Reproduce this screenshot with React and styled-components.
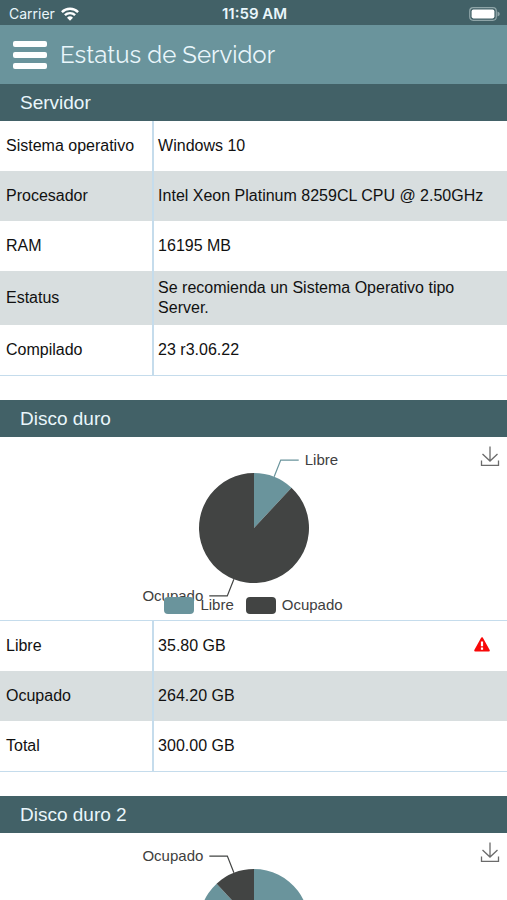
import React from 'react'
import styled, { createGlobalStyle, ThemeProvider } from 'styled-components'

const theme = {
    primary: '#6a949c',
    dark: '#426167',
    slice: '#424443',
    stripe: '#d8dedf',
    line: '#c5dcec',
    text: '#111111',
    label: '#404040',
    light: '#e9f6fb',
}

const GlobalStyle = createGlobalStyle`
    * {
        box-sizing: border-box;
    }
    body {
        margin: 0;
        background: #ffffff;
        font-family: "Liberation Sans", Arial, sans-serif;
    }
`

const Page = styled.div`
    display: flex;
    flex-direction: column;
    height: 100vh;
    color: ${({ theme }) => theme.text};
`
const StatusBar = styled.div`
    display: grid;
    grid-template-columns: 1fr auto 1fr;
    align-items: center;
    flex: none;
    height: 25px;
    padding: 2px 7px 0 9px;
    background: ${({ theme }) => theme.dark};
    color: ${({ theme }) => theme.light};
    font-family: Inter, sans-serif;
    font-size: 14px;
`
const Carrier = styled.div`
    display: flex;
    align-items: center;
    gap: 6px;
`
const Clock = styled.div`
    font-size: 15px;
    font-weight: 600;
`
const Battery = styled.svg`
    justify-self: end;
`
const Header = styled.header`
    display: flex;
    align-items: center;
    flex: none;
    gap: 13px;
    height: 59px;
    padding: 0 13px;
    background: ${({ theme }) => theme.primary};
`
const MenuButton = styled.button`
    display: flex;
    flex-direction: column;
    gap: 5px;
    width: 34px;
    padding: 0;
    border: none;
    background: none;
    cursor: pointer;
`
const Bar = styled.span`
    height: 6px;
    border-radius: 2px;
    background: #ffffff;
`
const PageTitle = styled.h1`
    margin: 0;
    font-family: Raleway, Lato, sans-serif;
    font-size: 24px;
    font-weight: 400;
    line-height: 32px;
    color: ${({ theme }) => theme.light};
`
const Content = styled.main`
    flex: 1;
    overflow-y: auto;
    scrollbar-width: none;
`
const Section = styled.section`
    margin-bottom: 24px;
`
const SectionTitle = styled.h2`
    margin: 0;
    padding: 0 20px;
    font-size: 19px;
    font-weight: 400;
    line-height: 37px;
    background: ${({ theme }) => theme.dark};
    color: ${({ theme }) => theme.light};
`
const Table = styled.table`
    width: 100%;
    table-layout: fixed;
    border-collapse: separate;
    border-spacing: 0;
    border-bottom: 1px solid ${({ theme }) => theme.line};
    font-size: 16px;
    line-height: 20px;
`
const Row = styled.tr`
    height: 50px;
    &:nth-child(even) {
        background: ${({ theme }) => theme.stripe};
    }
`
const Name = styled.th`
    width: 30%;
    padding: 7px 6px;
    font-weight: 400;
    text-align: left;
`
const Value = styled.td`
    padding: 7px 16px 7px 4px;
    border-left: 2px solid ${({ theme }) => theme.line};
`
const ValueContent = styled.div`
    display: flex;
    align-items: center;
    justify-content: space-between;
`
const ChartBox = styled.div`
    position: relative;
    display: flex;
    justify-content: center;
    height: 184px;
    border-bottom: 1px solid ${({ theme }) => theme.line};
`
const SliceLabel = styled.text`
    font-size: 15px;
    fill: ${({ theme }) => theme.label};
`
const Legend = styled.div`
    position: absolute;
    bottom: 6px;
    left: 0;
    right: 0;
    display: flex;
    justify-content: center;
    gap: 12px;
`
const LegendItem = styled.div`
    display: flex;
    align-items: center;
    gap: 6px;
    font-size: 15px;
    line-height: 18px;
    color: ${({ theme }) => theme.label};
`
const Swatch = styled.span`
    width: 30px;
    height: 17px;
    border-radius: 4px;
    background: ${({ color }) => color};
`
const DownloadButton = styled.button`
    position: absolute;
    top: 8px;
    right: 7px;
    display: flex;
    padding: 0;
    border: none;
    background: none;
    cursor: pointer;
`

const server = [
    { name: 'Sistema operativo', value: 'Windows 10' },
    { name: 'Procesador', value: 'Intel Xeon Platinum 8259CL CPU @ 2.50GHz' },
    { name: 'RAM', value: '16195 MB' },
    { name: 'Estatus', value: 'Se recomienda un Sistema Operativo tipo Server.' },
    { name: 'Compilado', value: '23 r3.06.22' },
]

const disk = [
    { name: 'Libre', value: '35.80 GB', alert: true },
    { name: 'Ocupado', value: '264.20 GB' },
    { name: 'Total', value: '300.00 GB' },
]

const RADIUS = 55

// point on the circle for a share of the turn, clockwise from the top
const point = (share, radius = RADIUS) => {
    const angle = share * 2 * Math.PI
    return [radius * Math.sin(angle), -radius * Math.cos(angle)]
}

const Slice = ({ label, from, to, color }) => {
    const [x1, y1] = point(from)
    const [x2, y2] = point(to)
    const middle = (from + to) / 2
    const [lx, ly] = point(middle)
    const [ex, ey] = point(middle, RADIUS + 18)
    const side = lx < 0 ? -1 : 1
    return (
        <g>
            <path
                d={`M0 0L${x1} ${y1}A${RADIUS} ${RADIUS} 0 ${to - from > 0.5 ? 1 : 0} 1 ${x2} ${y2}Z`}
                fill={color}
            />
            <path
                d={`M${lx} ${ly}L${ex} ${ey}h${side * 18}`}
                fill="none"
                stroke={color}
                strokeWidth="1.2"
            />
            <SliceLabel
                x={ex + side * 24}
                y={ey + 5}
                textAnchor={side < 0 ? 'end' : 'start'}
            >
                {label}
            </SliceLabel>
        </g>
    )
}

const AlertIcon = () => (
    <svg width="18" height="20" viewBox="0 0 18 20" role="img" aria-label="Alerta">
        <path d="M9 2.2L15.8 14.6H2.200Z" fill="#f80808" stroke="#f80808" strokeWidth="2" strokeLinejoin="round" />
        <path d="M9 5.600V10.200M9 11.600V13.800" stroke="#ffffff" strokeWidth="2.200" />
    </svg>
)

const PieChart = ({ libre }) => (
    <ChartBox>
        <svg width="260" height="183" viewBox="-130 -91 260 183">
            <Slice label="Libre" from={0} to={libre} color={theme.primary} />
            <Slice label="Ocupado" from={libre} to={1} color={theme.slice} />
        </svg>
        <Legend>
            <LegendItem><Swatch color={theme.primary} />Libre</LegendItem>
            <LegendItem><Swatch color={theme.slice} />Ocupado</LegendItem>
        </Legend>
        <DownloadButton aria-label="Descargar">
            <svg width="20" height="22" viewBox="0 0 20 22" fill="none" stroke="#6b6b6b" strokeWidth="1.3">
                <path d="M10 1.5V16M2.5 9L10 16L17.5 9M1.5 15.5V20.3H18.5V15.5" />
            </svg>
        </DownloadButton>
    </ChartBox>
)

const DataTable = ({ rows }) => (
    <Table>
        <tbody>
            {rows.map((row) => (
                <Row key={row.name}>
                    <Name scope="row">{row.name}</Name>
                    <Value>
                        <ValueContent>
                            {row.value}
                            {row.alert && <AlertIcon />}
                        </ValueContent>
                    </Value>
                </Row>
            ))}
        </tbody>
    </Table>
)

const App = () => {
    return (
        <ThemeProvider theme={theme}>
            <GlobalStyle />
            <Page>
                <StatusBar>
                    <Carrier>
                        Carrier
                        <svg width="18" height="14" viewBox="0 0 18 14" fill="none" stroke="#ffffff" strokeWidth="2.4">
                            <path d="M.9 5.1A11.5 11.5 0 0 1 17.1 5.1" />
                            <path d="M3.9 8.2A7.2 7.2 0 0 1 14.1 8.2" />
                            <path d="M9 13.8L6 10.8A4.3 4.3 0 0 1 12 10.8Z" fill="#ffffff" stroke="none" />
                        </svg>
                    </Carrier>
                    <Clock>11:59 AM</Clock>
                    <Battery width="31" height="14" viewBox="0 0 31 14">
                        <rect x=".7" y=".7" width="26.6" height="12.6" rx="3.5" fill="none" stroke="#8fa5a8" strokeWidth="1.2" />
                        <rect x="2.6" y="2.6" width="22.8" height="8.8" rx="1.8" fill="#ffffff" />
                        <path d="M28.5 4.5Q30.8 5.4 30.8 7T28.5 9.5Z" fill="#8fa5a8" />
                    </Battery>
                </StatusBar>
                <Header>
                    <MenuButton aria-label="Menú">
                        <Bar />
                        <Bar />
                        <Bar />
                    </MenuButton>
                    <PageTitle>Estatus de Servidor</PageTitle>
                </Header>
                <Content>
                    <Section>
                        <SectionTitle>Servidor</SectionTitle>
                        <DataTable rows={server} />
                    </Section>
                    <Section>
                        <SectionTitle>Disco duro</SectionTitle>
                        <PieChart libre={0.1193} />
                        <DataTable rows={disk} />
                    </Section>
                    <Section>
                        <SectionTitle>Disco duro 2</SectionTitle>
                        <PieChart libre={0.881} />
                    </Section>
                </Content>
            </Page>
        </ThemeProvider>
    )
}

export default App
